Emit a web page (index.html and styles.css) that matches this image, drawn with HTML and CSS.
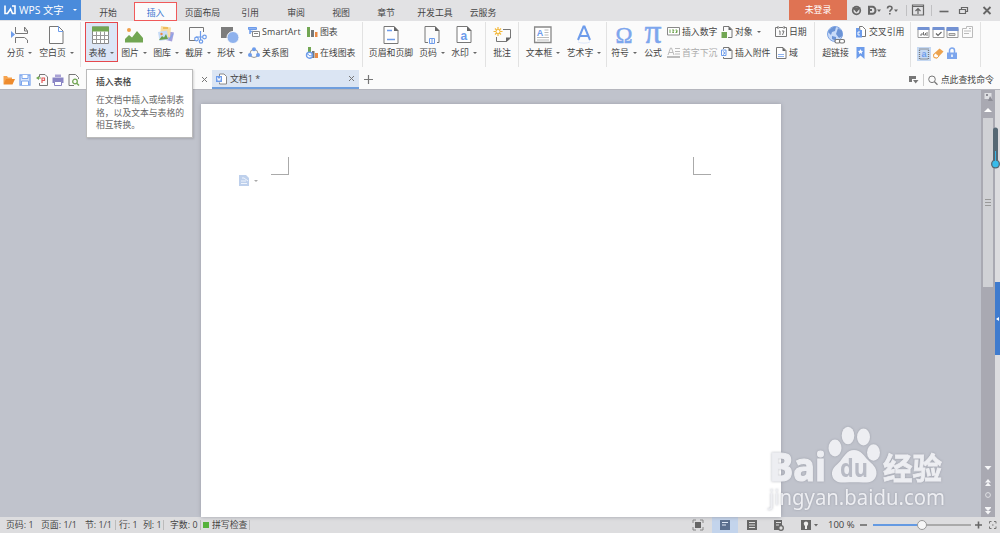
FILE: index.html
```html
<!DOCTYPE html>
<html lang="zh-CN">
  <head>
    <meta charset="UTF-8">
    <title>WPS 文字</title>
    <link rel="stylesheet" href="styles.css">
  </head>
  <body>
    <header class="titlebar">
      <div class="brand">
        <svg width="12" height="10" viewBox="0 0 12 10"><path d="M1 .5v8h2.500l3-4.500 2 4.500H11V1H8" fill="none" stroke="#fff" stroke-width="1.600"/></svg>
        <span class="brand-name">WPS 文字</span>
        <i class="caret light"></i>
      </div>
      <nav class="tabs">
        <a class="t-start">开始</a>
        <a class="t-insert">插入</a>
        <a class="t-layout">页面布局</a>
        <a class="t-ref">引用</a>
        <a class="t-review">审阅</a>
        <a class="t-view">视图</a>
        <a class="t-chapter">章节</a>
        <a class="t-dev">开发工具</a>
        <a class="t-cloud">云服务</a>
      </nav>
      <div class="login">未登录</div>
      <svg class="window-tools" width="153" height="20" viewBox="0 0 153 20" fill="none" stroke="#666" stroke-width="1.200">
        <circle cx="9.500" cy="10.500" r="3.800" stroke-width="1.700"/><path d="M6.500 8l3 3.500L12.500 8z" fill="#666"/>
        <path d="M22 6.800h3.500a3 3.500 0 0 1 0 7H22zM21 10h4" stroke-width="2"/><path d="M30 9.500h4l-2 2.500z" fill="#666" stroke="none"/>
        <path d="M40.500 8.500c0-3 4.500-3 4.500-.3 0 1.800-2.200 1.600-2.200 3.600M42.800 13v1.500" stroke-width="1.600"/><path d="M47 9.500h4l-2 2.500z" fill="#666" stroke="none"/>
        <path d="M59.500 5v11M84.500 5v11" stroke="#c0c0c2" stroke-width="1"/>
        <path d="M65.500 5h11v10h-11zM65 6.500h12M71 14V9M68.500 11L71 8.500l2.500 2.500"/>
        <path d="M92.500 11.500h9" stroke-width="1.600"/>
        <path d="M112.500 9.500h6v4h-6zM114.500 9V7.500h6v4H119"/>
        <path d="M136.500 7l7 7M143.500 7l-7 7" stroke-width="1.800"/>
      </svg>
    </header>

    <section class="ribbon">
      <div class="group g-pages">
        <button class="big b-break">
          <svg width="18" height="18" viewBox="0 0 18 18" fill="none" stroke="#777"><path d="M4.500 1v6.500h12V5l-3-4M13.500 1v4h3M4.500 17v-5.500h9l3 2.500v3"/><path d="M0 5l4 3.500-4 3.500z" fill="#6d9ceb" stroke="none"/></svg>
          <span>分页<i class="caret"></i></span>
        </button>
        <button class="big b-blank">
          <svg width="18" height="18" viewBox="0 0 18 18" fill="none" stroke="#777"><path d="M1.500.5h9l4.500 4.500v12.500h-13.500z" fill="#fff"/><path d="M10.500 0v5.500H15" stroke="#6d9ceb"/></svg>
          <span>空白页<i class="caret"></i></span>
        </button>
      </div>

      <div class="group g-objects">
        <button class="big b-table">
          <svg width="18" height="18" viewBox="0 0 18 18"><path d="M.5 1h16v16.500H.5z" fill="#fff" stroke="#888"/><path d="M0 .5h17v5H0z" fill="#72a653"/><path d="M4.500 5.500v12M8.500 5.500v12M12.500 5.500v12M0 9.500h17M0 13.500h17" stroke="#999" fill="none"/></svg>
          <span>表格<i class="caret"></i></span>
        </button>
        <button class="big b-std">
          <svg width="18" height="18" viewBox="0 0 18 18"><circle cx="4" cy="4" r="2" fill="#f0a04b"/><path d="M0 16.500V13l4-4 3 2.500L12 5l6 7v4.500z" fill="#72a653"/></svg>
          <span>图片<i class="caret"></i></span>
        </button>
        <button class="big b-std">
          <svg width="18" height="18" viewBox="0 0 18 18"><path d="M9 5l8 1.500-2 9-8-2z" fill="#a5a1dd"/><path d="M4 0l10 1.500-1 10L3 10z" fill="#f7dda4"/><path d="M6 1h5v2H6z" fill="#f0bd5c"/><path d="M1 6l9-1.500 1.500 9-9 1.500z" fill="#c7dcf7"/><circle cx="4.500" cy="8" r="1.200" fill="#e98945"/><path d="M2 14l3-4 2 1.500L9 8l2 5z" fill="#68a04b"/><path d="M12 14l4-6" stroke="#7da6ed"/></svg>
          <span>图库<i class="caret"></i></span>
        </button>
        <button class="big b-std">
          <svg width="18" height="18" viewBox="0 0 18 18" fill="none"><path d="M6 14.500H.5v-13h14V6" stroke="#777"/><g stroke="#6d9ceb" stroke-width="1.200"><path d="M11.500 5v9M7 11h7"/><circle cx="7.500" cy="13" r="1.800"/><circle cx="15.500" cy="11" r="1.800"/><circle cx="12" cy="15.500" r="1.700"/></g></svg>
          <span>截屏<i class="caret"></i></span>
        </button>
        <button class="big b-std">
          <svg width="18" height="18" viewBox="0 0 18 18"><path d="M0 1h12v11H0z" fill="#7d7d7d"/><circle cx="12" cy="11.500" r="6" fill="#8fb2ed" stroke="#fbfbfb"/></svg>
          <span>形状<i class="caret"></i></span>
        </button>
        <div class="stack s-smart">
          <button class="small">
            <svg width="12" height="12" viewBox="0 0 12 12" fill="none"><path d="M0 2h8M2 4v4M2 5.500h3" stroke="#6d9ceb" stroke-width="1.500"/><path d="M.5 1.500h8v2h-8z" stroke="#6d9ceb"/><path d="M4.500 5.500h7v5h-7zM6 7.500h4" fill="#fff" stroke="#888"/></svg>
            <span class="latin">SmartArt</span>
          </button>
          <button class="small">
            <svg width="12" height="12" viewBox="0 0 12 12"><circle cx="6" cy="6.500" r="4" fill="none" stroke="#999"/><g fill="#6d9ceb"><circle cx="6" cy="2.300" r="2"/><circle cx="2" cy="8" r="2"/><circle cx="10" cy="8" r="2"/></g></svg>
            <span>关系图</span>
          </button>
        </div>
        <div class="stack">
          <button class="small">
            <svg width="12" height="12" viewBox="0 0 12 12"><path d="M1 1h3v10H1z" fill="#72a653"/><path d="M5 4h3v7H5z" fill="#777"/><path d="M9 6h2.500v5H9z" fill="#e98945"/></svg>
            <span>图表</span>
          </button>
          <button class="small">
            <svg width="12" height="12" viewBox="0 0 12 12"><path d="M2 0h3v7H2z" fill="#72a653"/><path d="M6 4h2.500v7H6z" fill="#777"/><path d="M9 6h3v5H9z" fill="#e98945"/><circle cx="3.500" cy="8.200" r="3" fill="#fff" stroke="#6d9ceb" stroke-width="1.400"/><path d="M1 6.500L4 9l2-1" stroke="#6d9ceb" fill="none"/></svg>
            <span>在线图表</span>
          </button>
        </div>
      </div>

      <div class="group g-header">
        <button class="big b-header">
          <svg width="18" height="18" viewBox="0 0 18 18" fill="none"><path d="M2 .5h10l4 4v13H2z" fill="#fff" stroke="#777"/><path d="M12 0v5h4.500z" fill="#666"/><path d="M5 4.500h5M5 13.500h8" stroke="#6d9ceb" stroke-width="1.500"/></svg>
          <span>页眉和页脚</span>
        </button>
        <button class="big b-std">
          <svg width="18" height="18" viewBox="0 0 18 18" fill="none"><path d="M5 16.500H2V.5h10l4 4v12h-2" stroke="#777"/><path d="M12 0v5h4.500z" fill="#666"/><path d="M6.500 12.500h5v5h-5zM9 12.500v5" stroke="#6d9ceb"/></svg>
          <span>页码<i class="caret"></i></span>
        </button>
        <button class="big b-std">
          <svg width="18" height="18" viewBox="0 0 18 18" fill="none"><path d="M2 .5h10l4 4v12H2z" fill="#fff" stroke="#777"/><path d="M12 0v5h4.500z" fill="#666"/><text class="glyph" x="5.500" y="14" font-size="12" fill="#6d9ceb">a</text></svg>
          <span>水印<i class="caret"></i></span>
        </button>
      </div>

      <div class="group g-comment">
        <button class="big b-comment">
          <svg width="18" height="18" viewBox="0 0 18 18" fill="none"><path d="M10 3.500h7.500v8.500l-4 3.500h-10V11" stroke="#777"/><path d="M13 16v-4.500h5z" fill="#666"/><path d="M5 1v9M.5 5.500h9M2 2.500l6 6M8 2.500l-6 6" stroke="#f3b93d" stroke-width="1.200"/><circle cx="5" cy="5.500" r="2" fill="#fff" stroke="#f3b93d"/></svg>
          <span>批注</span>
        </button>
      </div>

      <div class="group g-text">
        <button class="big b-textbox">
          <svg width="18" height="18" viewBox="0 0 18 18" fill="none"><path d="M.6 1h16.400v15.500H.6z" fill="#fff" stroke="#888" stroke-width="1.300"/><text class="glyph" x="2.800" y="10" font-size="9" fill="#6d9ceb">A</text><path d="M10.500 4h4M10.500 6.500h4M10.500 9h4M3 11.500h12M3 14h12" stroke="#bbb"/></svg>
          <span>文本框<i class="caret"></i></span>
        </button>
        <button class="big b-art">
          <svg width="18" height="18" viewBox="0 0 18 18" fill="none"><path d="M3 14L8.500.5h1L15 14M5 10h8" stroke="#6d9ceb" stroke-width="2"/><path d="M3 16c3 1.500 9 1.500 12 0" stroke="#dde8fa"/></svg>
          <span>艺术字<i class="caret"></i></span>
        </button>
      </div>

      <div class="group g-symbol">
        <button class="big b-std">
          <svg width="18" height="18" viewBox="0 0 18 18"><text class="math" x="0.500" y="17" font-size="24" textLength="17" lengthAdjust="spacingAndGlyphs">Ω</text></svg>
          <span>符号<i class="caret"></i></span>
        </button>
        <button class="big b-formula">
          <svg width="18" height="18" viewBox="0 0 18 18"><text class="math" x="0.500" y="16.500" font-size="33" textLength="17" lengthAdjust="spacingAndGlyphs">π</text></svg>
          <span>公式</span>
        </button>
        <div class="stack s-number">
          <button class="small">
            <svg width="13" height="12" viewBox="0 0 13 12"><path d="M.5 1.500h12v7.500H.5z" fill="#fff" stroke="#888"/><path d="M3 3.500v3.500M5 4h2L5.500 6.500H7M8.500 4H10v2.500H8.500M9 5.500h1" fill="none" stroke="#72a653"/></svg>
            <span>插入数字</span>
          </button>
          <button class="small disabled">
            <svg width="13" height="12" viewBox="0 0 13 12" fill="none" stroke="#bbb"><path d="M1 8l2.500-7h1L7 8M2 5.500h4M8 1.500h5M8 4.500h5M8 7h5"/><path d="M0 10h13" stroke-width="2"/></svg>
            <span>首字下沉</span>
          </button>
        </div>
        <div class="stack s-object">
          <button class="small">
            <svg width="12" height="12" viewBox="0 0 12 12"><path d="M2.500 5V.5H8l3 3v8H7" fill="none" stroke="#777"/><path d="M7.500 0v4H11z" fill="#666"/><path d="M.5 6H6v6H.5z" fill="#72a653"/></svg>
            <span>对象<i class="caret"></i></span>
          </button>
          <button class="small">
            <svg width="12" height="12" viewBox="0 0 12 12" fill="none"><path d="M2.500 2V.5H8l3 3v8H2.500V10" stroke="#777"/><path d="M7.500 0v4H11z" fill="#666"/><path d="M.5 3h4.500v5.500H.5zM2 4.500l2 1.500-2 1.500" stroke="#6d9ceb"/></svg>
            <span>插入附件</span>
          </button>
        </div>
        <div class="stack">
          <button class="small">
            <svg width="12" height="12" viewBox="0 0 12 12" fill="none" stroke="#777"><path d="M3 1.500H.5v9h11v-9H9M3 0v3M9 0v3M4 1.500h4M4 5h1v4M7 5h2L7.500 9"/></svg>
            <span>日期</span>
          </button>
          <button class="small">
            <svg width="12" height="12" viewBox="0 0 12 12" fill="none"><path d="M1.500.5H8l3 3v8H1.500z" fill="#fff" stroke="#777"/><path d="M7.500 0v4H11z" fill="#666"/><path d="M3 7.500h6M3 9.500h6" stroke="#8fb2ed" stroke-width="1.200"/></svg>
            <span>域</span>
          </button>
        </div>
      </div>

      <div class="group g-link">
        <button class="big b-link">
          <svg width="18" height="18" viewBox="0 0 18 18"><circle cx="8" cy="8" r="7.500" fill="#c9dbf8" stroke="#7ea5e4"/><path d="M1 6c2-4 6-6 8-5l-1 4-3 1-1 3zM11 2l4 3 .5 5-3.500 2-3-4zM5 10l4 1v4l-4-2z" fill="#6c94d6"/><g fill="#fff" stroke="#777" stroke-width="1.200"><rect x="8" y="13.500" width="5" height="3.500" rx="1.500"/><rect x="12.500" y="13.500" width="5" height="3.500" rx="1.500"/></g></svg>
          <span>超链接</span>
        </button>
        <div class="stack">
          <button class="small">
            <svg width="12" height="12" viewBox="0 0 12 12"><path d="M4.500.5h3l3 3v7h-5z" fill="#fff" stroke="#777"/><path d="M1 2h3v2h3v7.500H1z" fill="#6d9ceb"/><path d="M5 6H3v3h2" stroke="#fff" fill="none"/></svg>
            <span>交叉引用</span>
          </button>
          <button class="small">
            <svg width="12" height="12" viewBox="0 0 12 12"><path d="M1.500 0h8v12l-4-3.500-4 3.500z" fill="#6d9ceb"/><path d="M5.500 2l.8 1.700 1.800.2-1.300 1.300.3 1.800-1.600-.9-1.600.9.300-1.800L2.900 3.900l1.800-.2z" fill="#fff"/></svg>
            <span>书签</span>
          </button>
        </div>
      </div>

      <div class="group g-forms">
        <svg width="13" height="13" viewBox="0 0 13 13" fill="none"><path d="M1 2.500h11v9H1z" fill="#fff" stroke="#999"/><path d="M.5 1h12v3H.5z" fill="#7392d3"/><path d="M3 9h2V7M6.500 6v3h2V7M10 6v4" stroke="#777"/></svg>
        <svg width="13" height="13" viewBox="0 0 13 13" fill="none"><path d="M1 2.500h11v9H1z" fill="#fff" stroke="#999"/><path d="M.5 1h12v3H.5z" fill="#7392d3"/><path d="M4 7.500l2 2L9.500 6" stroke="#666" stroke-width="1.200"/></svg>
        <svg width="13" height="13" viewBox="0 0 13 13" fill="none"><path d="M1 2.500h11v9H1z" fill="#fff" stroke="#999"/><path d="M.5 1h12v4H.5z" fill="#7392d3"/><path d="M3 7.500h6v2H3z" fill="#ddd" stroke="#999"/></svg>
        <svg width="13" height="13" viewBox="0 0 13 13" fill="none" stroke="#bbb"><path d="M1.500 2.500h4V.5h6v11h-10zM3 5h7M3 7.500h5M8 2.500h2"/></svg>
        <svg class="on" width="14" height="14" viewBox="0 0 14 14"><path d="M2.500 2h9v10h-9z" fill="none" stroke="#777" stroke-dasharray="1 1" stroke-width="1.300"/><text class="glyph" x="4.500" y="10" font-size="9" fill="#6d9ceb">a</text></svg>
        <svg width="13" height="13" viewBox="0 0 13 13"><path d="M1 7.500L7.500 1.500l4 3L5 11.500 2 11z" fill="#eda34e"/><path d="M3.500 6L7 9l-2 2-3-.5-.5-2.500z" fill="#fff" stroke="#eda34e"/></svg>
        <svg width="13" height="13" viewBox="0 0 13 13"><path d="M3.500 6V3.500a2.500 2.500 0 0 1 5 0V6" fill="none" stroke="#7da6ed" stroke-width="1.500"/><path d="M1 5.500h10V12H1z" fill="#7da6ed"/><path d="M6 7.500v2.500" stroke="#fff" stroke-width="1.500"/></svg>
      </div>
    </section>

    <div class="docbar">
      <div class="quick">
        <svg width="12" height="12" viewBox="0 0 12 12"><path d="M.5 10V2h3.500l1 1.500h4V5" fill="#f6a34e"/><path d="M.5 10.500L3 5h9l-2.500 5.500z" fill="#ee8b2d"/></svg>
        <svg width="12" height="12" viewBox="0 0 12 12" fill="none" stroke="#7da6ed"><path d="M1 1h10v10H1z" fill="#dce8fc" stroke-width="1.300"/><path d="M3 1v3.500h6V1M2.500 11V7h7v4" fill="#fff"/></svg>
        <svg width="12" height="12" viewBox="0 0 12 12" fill="none"><path d="M3.500 3V.5H9l2.500 2.500v8.500h-8V9" stroke="#777"/><path d="M6 9V4h2.500v2.500H6" stroke="#e35d5d" stroke-width="1.200"/><path d="M0 4l3-2v1.500h2v1H3V6z" fill="#72a653"/></svg>
        <svg width="12" height="12" viewBox="0 0 12 12"><path d="M3 .5h6V3H3z" fill="#aaa3d5"/><path d="M.5 3.500h11V9H.5z" fill="#8984c4"/><path d="M2.500 7.500h7v4h-7z" fill="#fff" stroke="#8984c4"/></svg>
        <svg width="12" height="12" viewBox="0 0 12 12" fill="none"><path d="M6 11.500H1V.5h6.500l3 3V5" stroke="#777"/><circle cx="7" cy="7.500" r="2.300" stroke="#72a653" stroke-width="1.300"/><path d="M9 9.500l2 2" stroke="#72a653" stroke-width="1.500"/></svg>
      </div>
      <svg class="close" width="7" height="7" viewBox="0 0 7 7"><path d="M1 1l5 5M6 1L1 6" stroke="#777"/></svg>
      <div class="doctab">
        <svg width="12" height="12" viewBox="0 0 12 12" fill="none"><path d="M3.500 3V1H8l2.500 2.500v7.500h-7V9.500" fill="#fff" stroke="#888"/><path d="M0 3h6v6H0z" fill="#6d9ceb"/><path d="M1.500 4.500l.7 3L3 5.500l.8 2 .7-3" stroke="#fff"/></svg>
        <span>文档1 *</span>
        <svg class="tab-close" width="7" height="7" viewBox="0 0 7 7"><path d="M1 1l5 5M6 1L1 6" stroke="#777"/></svg>
      </div>
      <svg class="plus" width="9" height="9" viewBox="0 0 9 9"><path d="M4.500 0v9M0 4.500h9" stroke="#777" stroke-width="1.200"/></svg>
      <div class="search">
        <svg width="10" height="8" viewBox="0 0 10 8"><path d="M0 0h7v3H3v3H0z" fill="#777"/><path d="M4 4h5.500L6.700 7.500z" fill="#777"/></svg>
        <i class="rule"></i>
        <svg width="10" height="10" viewBox="0 0 10 10" fill="none" stroke="#777"><circle cx="4" cy="4.300" r="3.300"/><path d="M6.500 6.800L9.500 9.800" stroke-width="1.300"/></svg>
        <span>点此查找命令</span>
      </div>
    </div>

    <main class="workspace">
      <div class="page">
        <i class="corner left"></i>
        <i class="corner right"></i>
        <div class="paste">
          <svg width="10" height="11" viewBox="0 0 10 11"><path d="M0 0h7l3 3v8H0z" fill="#bed0ec"/><path d="M3 3h2l4 3M2 6h5M2 8.500h6" stroke="#eff4fc" fill="none"/></svg>
          <i class="caret pale"></i>
        </div>
      </div>
      <div class="scrollbar">
        <svg width="9" height="9" viewBox="0 0 9 9"><path d="M.5 1h7v6h-7z" fill="#dedfe3"/><path d="M2 2h2v2H2zM6 4l3 5H4z" fill="#8d8d96"/></svg>
        <svg class="up" width="8" height="4" viewBox="0 0 8 4"><path d="M4 0l4 4H0z" fill="#fff"/></svg>
        <div class="thumb"><i></i><i></i><i></i></div>
        <svg class="nav" width="10" height="50" viewBox="0 0 10 50" fill="#f5f5f7"><path d="M1.500 0h7L5 4zM5 13l3 3.500H2zM5 16.500L8 20H2zM2 42h6l-3 3zM2 45h6l-3 3.500zM2 41h6v1H2z"/><circle cx="5" cy="29" r="2.400" fill="none" stroke="#dedfe3"/></svg>
      </div>
      <div class="edge"><div class="handle"><i></i></div></div>
      <svg class="gauge" width="10" height="44" viewBox="0 0 10 44"><path d="M5.500 3v33" stroke="#566874" stroke-width="5" stroke-linecap="round"/><circle cx="5.500" cy="37" r="4.500" fill="#566874"/><path d="M5.500 24v12" stroke="#3ab5e6"/><circle cx="5.500" cy="37" r="3.200" fill="#38bbea"/></svg>
      <svg class="watermark" width="190" height="96" viewBox="0 0 190 96">
        <text class="wm-bold" x="4" y="59.500" font-size="39" textLength="57" lengthAdjust="spacingAndGlyphs">Bai</text>
        <g class="wm-paw">
          <ellipse cx="70" cy="27" rx="6.500" ry="8.500"/><ellipse cx="83" cy="14.500" rx="6.300" ry="8.800"/><ellipse cx="98.500" cy="16" rx="6.500" ry="8.500"/><ellipse cx="108.500" cy="31.500" rx="6.500" ry="8.300"/>
          <path d="M89 29c7 0 10 6 14 10s9 7 8.500 14c-1 8-8.500 9-13.500 8.500-6-.5-12-.5-18 0-6 .5-12-1-13-8-.5-6 4-9 8-13 4-5 7-11.500 14-11.500z"/>
        </g>
        <text class="wm-du" x="75" y="56" font-size="25" textLength="28" lengthAdjust="spacingAndGlyphs">du</text>
        <text class="wm-bold cjk" x="118" y="58" font-size="30" textLength="59" lengthAdjust="spacingAndGlyphs">经验</text>
        <text class="wm-url" x="4" y="84" font-size="21" textLength="176" lengthAdjust="spacingAndGlyphs">jingyan.baidu.com</text>
      </svg>
    </main>

    <div class="tooltip">
      <strong>插入表格</strong>
      <p>在文档中插入或绘制表<br>格，以及文本与表格的<br>相互转换。</p>
    </div>

    <footer class="status">
      <span class="st-code">页码: 1</span>
      <span class="st-page">页面: 1/1</span>
      <span class="st-sect">节: 1/1</span>
      <span class="st-row">行: 1</span>
      <span class="st-col">列: 1</span>
      <span class="st-count">字数: 0</span>
      <span class="st-spell"><i></i>拼写检查</span>
      <svg class="views" width="134" height="16" viewBox="0 0 134 16" fill="none">
        <path d="M5 5h6v6H5z" fill="#666"/><path d="M3 6V3h3M10 3h3v3M13 10v3h-3M6 13H3v-3" stroke="#888"/>
        <path d="M22 0h26v16H22z" fill="#c3d4ec"/><path d="M30 3h10v10H30z" fill="#5b6f8e"/><path d="M32 5.500h6M32 8h4" stroke="#dfe8f5"/>
        <path d="M57 3h10v10H57z" fill="#666"/><path d="M59 5.500h6M59 8h6M59 10.500h6" stroke="#ddd"/>
        <path d="M84 3h8v10h-8z" fill="#666"/><path d="M86 5.500h5M86 8h3" stroke="#ddd"/><circle cx="91" cy="11" r="2.300" fill="#ddd" stroke="#666" stroke-width="1.300"/>
        <path d="M111 3h10v10h-10z" fill="#666"/><circle cx="116" cy="6.800" r="2.200" fill="#eee"/><path d="M116 8v4" stroke="#eee" stroke-width="2"/>
        <path d="M124 7h4l-2 2.500z" fill="#666"/>
      </svg>
      <span class="zoom">100 %</span>
      <svg class="slider" width="140" height="16" viewBox="0 0 140 16" fill="none"><path d="M1 8h7M116 8h7M119.500 4.500v7" stroke="#666" stroke-width="1.600"/><path d="M14 8h46" stroke="#649ae2" stroke-width="2"/><path d="M60 8h52" stroke="#999" stroke-width="1.500"/><circle cx="63" cy="8" r="4.500" fill="#f7f7f7" stroke="#999"/><path d="M130.500 6.500v-2h2M135 4.500h2v2M130.500 9.500v2h2M135 11.500h2v-2M133 8h1.500" stroke="#777"/></svg>
    </footer>
  </body>
</html>
```

FILE: styles.css
```css
* {
  box-sizing: border-box;
}

body {
  margin: 0;
  width: 1000px;
  height: 533px;
  overflow: hidden;
  position: relative;
  display: flex;
  flex-direction: column;
  background: #fbfbfb;
  color: #444;
  font: 8.9px/12px "Open Sans", "Noto Sans CJK SC", sans-serif;
}

svg {
  display: block;
  flex: none;
  overflow: visible;
}

button {
  border: 0;
  padding: 0;
  background: none;
  color: inherit;
  font: inherit;
  white-space: nowrap;
}

.caret {
  display: inline-block;
  border: 2px solid transparent;
  border-top: 2.5px solid #666;
  border-bottom: 0;
  margin-left: 4px;
  vertical-align: 2px;
}

.caret.light {
  border-top-color: #fff;
  margin-left: 9px;
}

.caret.pale {
  border-top-color: #aaa;
  margin-left: 5px;
}

/* title bar */
.titlebar {
  display: flex;
  height: 21px;
  background: #e2e2e4;
}

.brand {
  display: flex;
  align-items: center;
  width: 81px;
  height: 20px;
  padding-left: 4px;
  background: #4a8bdb;
  color: #fff;
}

.brand-name {
  width: 45px;
  margin-left: 3px;
  font-size: 10.3px;
  white-space: nowrap;
}

.tabs {
  display: flex;
  padding-left: 5px;
}

.tabs a {
  height: 19px;
  margin-top: 2px;
  line-height: 21px;
  text-align: center;
}

.t-start,
.t-ref {
  width: 44px;
}

.tabs .t-insert {
  width: 43px;
  margin-left: 4px;
  border: 1px solid #f05a5a;
  background: #fbfbfb;
  color: #3b78d0;
  line-height: 19px;
}

.t-layout {
  width: 51px;
}

.t-review,
.t-chapter {
  width: 48px;
}

.t-view {
  width: 42px;
}

.t-dev {
  width: 50px;
}

.t-cloud {
  width: 46px;
}

.login {
  width: 58px;
  height: 20px;
  margin-left: auto;
  background: #df7353;
  color: #fff;
  line-height: 20px;
  text-align: center;
}

/* ribbon */
.ribbon {
  display: flex;
  height: 49px;
}

.group {
  display: flex;
  height: 45px;
  margin-top: 1px;
  border-right: 1px solid #e2e2e2;
}

.big {
  display: flex;
  flex-direction: column;
  align-items: center;
  height: 41px;
  padding-top: 4px;
}

.big span {
  margin-top: 3px;
}

.g-pages {
  width: 81px;
  padding-left: 3px;
}

.b-break {
  width: 33px;
}

.b-blank {
  width: 41px;
}

.g-objects {
  width: 282px;
  padding-left: 4px;
}

.b-std {
  width: 32px;
}

.b-table {
  width: 33px;
  height: 40px;
  padding-top: 3px;
  border: 1px solid #e5484d;
  background: #dce6f6;
}

.b-table svg {
  margin-left: -1px;
}

.g-header {
  width: 123px;
  padding-left: 3px;
}

.b-header {
  width: 50px;
}

.g-comment {
  width: 33px;
}

.b-comment {
  width: 32px;
}

.g-text {
  width: 88px;
  padding-left: 3px;
}

.b-textbox {
  width: 42px;
}

.b-art {
  width: 40px;
}

.g-symbol {
  width: 208px;
  padding-left: 1px;
}

.b-formula {
  width: 26px;
}

.g-link {
  width: 96px;
  padding-left: 6px;
}

.b-link {
  width: 29px;
}

.stack {
  display: flex;
  flex-direction: column;
  gap: 9px;
  padding-top: 4px;
}

.s-smart {
  width: 58px;
}

.s-object {
  width: 54px;
}

.s-number {
  width: 55px;
  padding-left: 1px;
}

.g-link .stack {
  padding-left: 5px;
}

.g-objects .stack {
  padding-left: 2px;
}

.small {
  display: flex;
  align-items: center;
  gap: 2px;
  height: 12px;
}

.latin {
  letter-spacing: 0.2px;
}

.disabled {
  color: #aaa;
}

.glyph {
  font-family: "Liberation Sans", sans-serif;
  font-weight: bold;
}

.math {
  font-family: "Liberation Serif", serif;
  fill: #7da6ed;
  stroke: #7da6ed;
  stroke-width: 0.5;
}

.g-forms {
  display: grid;
  grid-template-columns: repeat(4, 14.7px);
  grid-template-rows: 21px 21px;
  align-items: center;
  width: 70px;
  padding-left: 6px;
}

.g-forms .on {
  background: #c5d8f2;
}

/* document tabs */
.docbar {
  display: flex;
  align-items: center;
  height: 19px;
}

.quick {
  display: flex;
  gap: 4.3px;
  width: 198px;
  padding-left: 3px;
}

.close {
  margin-left: 3px;
}

.doctab {
  display: flex;
  align-items: center;
  width: 147px;
  height: 19px;
  margin-left: 4px;
  padding: 0 4px;
  border-bottom: 2px solid #6f9edd;
  background: #dbe5f3;
}

.doctab span {
  margin: 1px 0 0 2px;
}

.tab-close {
  margin-left: auto;
}

.plus {
  margin-left: 5px;
}

.search {
  display: flex;
  align-items: center;
  gap: 4px;
  margin-left: auto;
  padding-right: 6px;
}

.search span {
  margin-left: -1px;
}

.rule {
  width: 1px;
  height: 12px;
  background: #ccc;
}

/* editing area */
.workspace {
  position: relative;
  display: flex;
  height: 428px;
  padding-left: 201px;
  background: #c0c3cc;
  border-top: 1px solid #b5b6bd;
}

.page {
  position: relative;
  width: 580px;
  margin-top: 14px;
  background: #fff;
  box-shadow: 0 0 4px #9b9ea8;
}

.corner {
  position: absolute;
  top: 53px;
  width: 18px;
  height: 18px;
  border-bottom: 1px solid #aaa;
}

.corner.left {
  left: 70px;
  border-right: 1px solid #aaa;
}

.corner.right {
  left: 492px;
  border-left: 1px solid #aaa;
}

.paste {
  display: flex;
  align-items: center;
  padding: 71px 0 0 38px;
}

.scrollbar {
  display: flex;
  flex-direction: column;
  align-items: center;
  width: 14px;
  margin-left: auto;
  padding-top: 2px;
  background: #a9a9b2;
}

.up {
  margin-top: 7px;
}

.thumb {
  display: flex;
  flex-direction: column;
  align-items: center;
  justify-content: center;
  gap: 2px;
  width: 10px;
  height: 169px;
  margin-top: 6px;
  background: #d0d1d5;
}

.thumb i {
  width: 6px;
  height: 1px;
  background: #999;
}

.nav {
  margin-top: auto;
  margin-bottom: 1px;
}

.edge {
  width: 5px;
  padding-top: 192px;
  background: #dcdcdf;
}

.handle {
  display: flex;
  align-items: center;
  height: 73px;
  background: #3f7bce;
}

.handle i {
  margin-left: 1px;
  border: 2px solid transparent;
  border-left: 0;
  border-right: 3px solid #fff;
}

.gauge {
  position: absolute;
  left: 990px;
  top: 37px;
}

.watermark {
  position: absolute;
  left: 765px;
  top: 331px;
  filter: drop-shadow(0 0 1px rgba(120, 123, 135, 0.5));
}

.wm-bold,
.wm-paw,
.wm-url {
  fill: #edeef2;
}

.wm-bold {
  stroke: #edeef2;
  stroke-width: 1.2;
}

.wm-bold.cjk {
  stroke-width: 0.8;
}

.wm-bold,
.wm-du {
  font-family: "Open Sans", "Noto Sans CJK SC", sans-serif;
  font-weight: bold;
}

.wm-du {
  fill: #b8bbc5;
}

.wm-url {
  font-family: "Noto Sans", sans-serif;
}

.tooltip {
  position: absolute;
  left: 86px;
  top: 69px;
  width: 107px;
  height: 69px;
  padding: 6px 9px;
  border: 1px solid #bbb;
  background: #fff;
  box-shadow: 1px 1px 2px rgba(0, 0, 0, 0.15);
}

.tooltip strong {
  display: block;
  font-weight: 500;
}

.tooltip p {
  margin: 6px 0 0;
  color: #666;
  font-size: 8.8px;
  line-height: 12.6px;
  white-space: nowrap;
}

/* status bar */
.status {
  display: flex;
  align-items: center;
  height: 16px;
  padding-left: 6px;
  background: #dddddf;
  white-space: nowrap;
}

.st-code {
  width: 35px;
}

.st-page {
  width: 44px;
}

.st-sect {
  width: 31px;
  border-right: 1px solid #bbb;
  line-height: 10px;
}

.st-row {
  width: 27px;
  padding-left: 3px;
}

.st-col {
  width: 21px;
  border-right: 1px solid #bbb;
  line-height: 10px;
}

.st-count {
  width: 37px;
  padding-left: 6px;
  border-right: 1px solid #bbb;
  line-height: 10px;
}

.st-spell {
  display: flex;
  align-items: center;
  gap: 3px;
  width: 49px;
  padding-left: 2px;
  border-right: 1px solid #bbb;
  line-height: 10px;
}

.st-spell i {
  width: 6px;
  height: 6px;
  background: #55b23c;
}

.views {
  margin-left: 440px;
}

.zoom {
  width: 31px;
  margin-left: 4px;
  font-size: 9.5px;
}
```
